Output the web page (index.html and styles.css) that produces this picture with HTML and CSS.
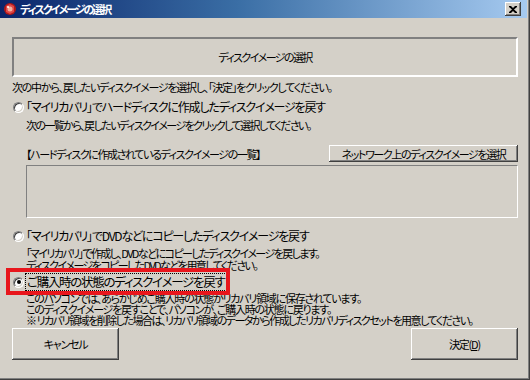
FILE: index.html
```html
<!DOCTYPE html>
<html lang="ja">
<head>
<meta charset="utf-8">
<title>ディスクイメージの選択</title>
<link rel="stylesheet" href="styles.css">
</head>
<body>
<div class="window">
  <div class="titlebar">
    <svg class="appicon" width="14" height="14" viewBox="0 0 14 14">
      <circle cx="7" cy="7" r="6" fill="#b01818"/>
      <path d="M3 4 L7 2 L11 4 L11 10 L7 12 L3 10 Z" fill="#e04848"/>
      <circle cx="7" cy="7" r="2.5" fill="#f4b0a0"/>
      <circle cx="5" cy="5" r="1" fill="#ffffff"/>
    </svg>
    <span class="title">ディスクイメージの選択</span>
    <span class="closebtn">
      <svg width="8" height="7" viewBox="0 0 8 7"><path d="M0 0h2l2 2 2-2h2v1L5 3.5 8 6v1H6L4 5 2 7H0V6l3-2.5L0 1z" fill="#000"/></svg>
    </span>
  </div>
  <div class="body">
    <div class="header">ディスクイメージの選択</div>
    <p class="intro">次の中から、戻したいディスクイメージを選択し、「決定」をクリックしてください。</p>

    <div class="option opt1">
      <span class="radio"></span>
      <span class="label narrow">「マイリカバリ」でハードディスクに作成したディスクイメージを戻す</span>
    </div>
    <p class="sub sub1">次の一覧から、戻したいディスクイメージをクリックして選択してください。</p>
    <div class="listhead">
      <span class="small">【ハードディスクに作成されているディスクイメージの一覧】</span>
      <span class="btn netbtn">ネットワーク上のディスクイメージを選択</span>
    </div>
    <div class="listbox"></div>

    <div class="option opt2">
      <span class="radio"></span>
      <span class="label narrow">「マイリカバリ」でDVDなどにコピーしたディスクイメージを戻す</span>
    </div>
    <div class="sub sub2">
      <p>「マイリカバリ」で作成し、DVDなどにコピーしたディスクイメージを戻します。</p>
      <p>ディスクイメージをコピーしたDVDなどを用意してください。</p>
    </div>

    <div class="option opt3">
      <span class="highlight"></span>
      <span class="radio checked"></span>
      <span class="label focus">ご購入時の状態のディスクイメージを戻す</span>
    </div>
    <div class="sub sub3">
      <p>このパソコンでは、あらかじめご購入時の状態がリカバリ領域に保存されています。</p>
      <p>このディスクイメージを戻すことで、パソコンが、ご購入時の状態に戻ります。</p>
      <p class="tight">※ リカバリ領域を削除した場合は、リカバリ領域のデータから作成したリカバリディスクセットを用意してください。</p>
    </div>

    <div class="buttons">
      <span class="btn big">キャンセル</span>
      <span class="btn big">決定(<u>D</u>)</span>
    </div>
  </div>
</div>
</body>
</html>
```
FILE: styles.css
```css
* { box-sizing: border-box; }
html, body { margin: 0; padding: 0; }
body {
  width: 530px; height: 380px; overflow: hidden;
  font-family: "Noto Sans CJK JP", "Noto Sans", sans-serif;
  font-feature-settings: "palt";
  color: #000;
  background: #d4d0c8;
}
p { margin: 0; }
.window {
  width: 530px; height: 380px;
  background: #d4d0c8;
  border-right: 1px solid #404040;
  border-bottom: 1px solid #404040;
  box-shadow: inset -1px -1px 0 #808080;
  display: flex; flex-direction: column;
}
.titlebar {
  height: 18px;
  margin: 0 2px 0 0;
  background: linear-gradient(to right, #0a246a 0%, #3a6ea5 45%, #a6caf0 100%);
  display: flex; align-items: center;
  padding: 0 6px 0 3px;
}
.appicon { flex: none; }
.title {
  color: #fff; font-weight: bold; font-size: 11px;
  margin-left: 3px; letter-spacing: -2px;
  flex: 1;
  line-height: 18px;
}
.closebtn {
  width: 16px; height: 14px;
  background: #d4d0c8;
  box-shadow: inset -1px -1px 0 #404040, inset 1px 1px 0 #fff, inset -2px -2px 0 #808080;
  display: flex; align-items: center; justify-content: center;
}
.body {
  padding: 19px 11px 0 12px;
  display: flex; flex-direction: column;
  font-size: 11px;
  letter-spacing: -1.25px;
  white-space: nowrap;
}
.header {
  height: 40px;
  border-top: 2px solid #808080;
  border-left: 2px solid #808080;
  border-right: 2px solid #fff;
  border-bottom: 2px solid #fff;
  display: flex; align-items: center; justify-content: center;
  font-size: 11px;
  letter-spacing: -1.6px;
}
.intro { margin-top: 4px; line-height: 12px; letter-spacing: -1.25px; }
.option {
  display: flex; align-items: center;
  position: relative;
  height: 18px;
}
.opt1 { margin-top: 5px; }
.label { font-size: 12.5px; letter-spacing: -1.3px; margin-left: 2px; line-height: 16px; }
.label.narrow { font-size: 12px; letter-spacing: -1.2px; }
.radio {
  width: 11px; height: 11px; border-radius: 50%;
  margin-left: 1px;
  background: #fff;
  border: 1px solid;
  border-color: #808080 #fff #fff #808080;
  box-shadow: inset 1px 1px 0 #404040, inset -1px -1px 0 #d4d0c8;
  flex: none;
  position: relative;
}
.radio.checked::after {
  content: ""; position: absolute;
  left: 2.5px; top: 2.5px; width: 4px; height: 4px; border-radius: 50%;
  background: #000;
}
.sub { margin-left: 14px; line-height: 12px; }
.sub1 { margin-top: 3px; letter-spacing: -1.6px; }
.listhead {
  margin-left: 14px; margin-top: 14px;
  display: flex; justify-content: space-between; align-items: center;
  height: 17px;
}
.small { letter-spacing: -1.4px; }
.btn {
  background: #d4d0c8;
  box-shadow: inset -1px -1px 0 #404040, inset 1px 1px 0 #fff, inset -2px -2px 0 #808080;
  display: flex; align-items: center; justify-content: center;
}
.netbtn { width: 189px; height: 17px; letter-spacing: -1.4px; }
.listbox {
  margin: 3px 0 0 14px;
  height: 53px;
  border-top: 1px solid #808080;
  border-left: 1px solid #808080;
  border-right: 1px solid #fff;
  border-bottom: 1px solid #fff;
}
.opt2 { margin-top: 9px; }
.sub2 { margin-top: 2px; letter-spacing: -1.6px; }
.opt3 { margin-top: 2px; }
.highlight {
  position: absolute;
  left: -6px; top: -5px;
  width: 224px; height: 27px;
  border: 4px solid #e8161c;
}
.focus { outline: 1px dotted #000; outline-offset: 0px; padding: 0 2px 0 1px; }
.sub3 { margin-top: 2px; line-height: 11px; }
.sub3 .tight { letter-spacing: -1.5px; }
.buttons {
  margin-top: 2px;
  display: flex; justify-content: space-between;
}
.big { width: 107px; height: 32px; }
```
